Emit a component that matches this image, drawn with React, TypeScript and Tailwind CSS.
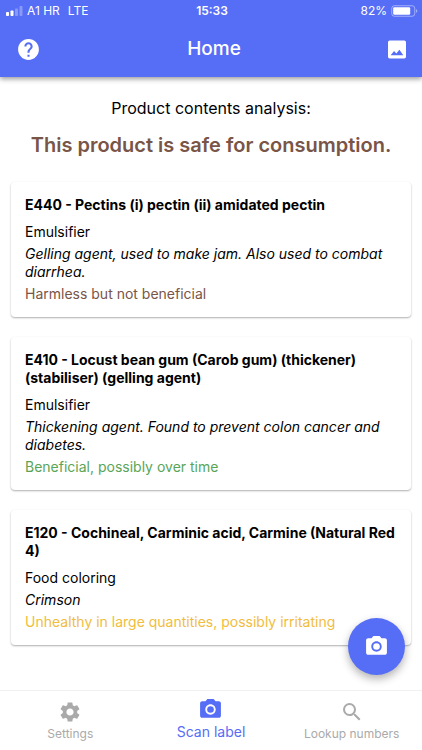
import { MdCameraAlt, MdHelp, MdSearch, MdSettings } from 'react-icons/md'

type Rating = 'harmless' | 'beneficial' | 'unhealthy'

type Additive = {
  title: string
  kind: string
  description: string
  effect: string
  rating: Rating
}

const ADDITIVES: Additive[] = [
  {
    title: 'E440 - Pectins (i) pectin (ii) amidated pectin',
    kind: 'Emulsifier',
    description: 'Gelling agent, used to make jam. Also used to combat diarrhea.',
    effect: 'Harmless but not beneficial',
    rating: 'harmless',
  },
  {
    title: 'E410 - Locust bean gum (Carob gum) (thickener) (stabiliser) (gelling agent)',
    kind: 'Emulsifier',
    description: 'Thickening agent. Found to prevent colon cancer and diabetes.',
    effect: 'Beneficial, possibly over time',
    rating: 'beneficial',
  },
  {
    title: 'E120 - Cochineal, Carminic acid, Carmine (Natural Red 4)',
    kind: 'Food coloring',
    description: 'Crimson',
    effect: 'Unhealthy in large quantities, possibly irritating',
    rating: 'unhealthy',
  },
]

const RATING_COLOR: Record<Rating, string> = {
  harmless: 'text-[#795548]',
  beneficial: 'text-[#5aa557]',
  unhealthy: 'text-[#f0bd3e]',
}

function SignalIcon() {
  return (
    <svg width="17" height="11" viewBox="0 0 17 11" fill="currentColor" aria-hidden="true">
      <rect x="0" y="6" width="3" height="4" rx="0.8" />
      <rect x="4.5" y="4.5" width="3" height="5.5" rx="0.8" />
      <rect x="9" y="2.5" width="3" height="7.5" rx="0.8" opacity="0.3" />
      <rect x="13.5" y="0" width="3" height="10" rx="0.8" opacity="0.3" />
    </svg>
  )
}

function BatteryIcon() {
  return (
    <svg width="27" height="12" viewBox="0 0 27 12" fill="none" aria-hidden="true">
      <rect x="0.75" y="0.75" width="23" height="10.5" rx="2.6" stroke="white" strokeOpacity="0.45" />
      <rect x="2.2" y="2.2" width="17" height="7.6" rx="1.2" fill="white" />
      <path d="M25 4.2c.9.3 1.4 1 1.4 1.8s-.5 1.5-1.4 1.8z" fill="white" fillOpacity="0.45" />
    </svg>
  )
}

function GalleryIcon() {
  return (
    <svg width="19" height="19" viewBox="0 0 19 19" aria-hidden="true">
      <path
        fill="currentColor"
        fillRule="evenodd"
        d="M1.800 0h15.400a1.800 1.800 0 0 1 1.800 1.800v15.400a1.800 1.800 0 0 1-1.800 1.800H1.800a1.800 1.800 0 0 1-1.800-1.800V1.800a1.800 1.800 0 0 1 1.800-1.800zM2.800 15.500h13.400l-4.200-5.800-3.200 4-2.400-2.600z"
      />
    </svg>
  )
}

function StatusBar() {
  return (
    <div className="grid h-[22px] grid-cols-3 items-center pr-1 pl-1.5 text-xs">
      <div className="flex items-center gap-1">
        <SignalIcon />
        <span>A1 HR</span>
        <span className="pl-1">LTE</span>
      </div>
      <span className="text-center font-semibold">15:33</span>
      <div className="flex items-center justify-end gap-1">
        <span>82%</span>
        <BatteryIcon />
      </div>
    </div>
  )
}

function AdditiveCard({ additive }: { additive: Additive }) {
  return (
    <li className="rounded bg-white p-3.5 text-sm leading-[18px] shadow-[0_1px_2px_rgba(0,0,0,0.32)]">
      <h3 className="mb-[9px] font-bold">{additive.title}</h3>
      <div className="space-y-1">
        <p>{additive.kind}</p>
        <p className="italic">{additive.description}</p>
        <p className={RATING_COLOR[additive.rating]}>{additive.effect}</p>
      </div>
    </li>
  )
}

export default function App() {
  return (
    <div className="flex min-h-screen flex-col bg-white font-['Inter',sans-serif] text-black">
      <header className="relative bg-[#566df5] text-white shadow-[0_2px_5px_rgba(0,0,0,0.4)]">
        <StatusBar />
        <div className="flex h-[55px] items-center justify-between px-4">
          <button type="button" aria-label="Help" className="flex w-6 justify-center">
            <MdHelp size={25} className="shrink-0" />
          </button>
          <h1 className="text-[19px] font-medium">Home</h1>
          <button type="button" aria-label="Pick from gallery" className="flex w-[18px] justify-center">
            <GalleryIcon />
          </button>
        </div>
      </header>

      <main className="flex-1 px-[11px] pt-5 pb-11">
        <p className="text-center text-base leading-[22px]">Product contents analysis:</p>
        <h2 className="mt-3 text-center text-xl leading-7 font-semibold text-[#795548]">
          This product is safe for consumption.
        </h2>
        <ul className="mt-[23px] space-y-5">
          {ADDITIVES.map(a => <AdditiveCard key={a.title} additive={a} />)}
        </ul>
      </main>

      <button
        type="button"
        aria-label="Take photo"
        className="fixed right-[17px] bottom-[75px] flex size-[57px] items-center justify-center rounded-full bg-[#566df5] text-white shadow-[0_4px_8px_rgba(0,0,0,0.3)]"
      >
        <MdCameraAlt size={25} />
      </button>

      <nav className="sticky bottom-0 grid h-[60px] grid-cols-3 border-t border-[#f0f0f0] bg-white text-xs leading-4 text-[#aaa]">
        <a href="#settings" className="flex flex-col items-center justify-end gap-0.5 pb-2">
          <MdSettings size={24} />
          <span>Settings</span>
        </a>
        <a href="#scan" className="flex flex-col items-center justify-end gap-0.5 pb-2.5 text-sm leading-4 text-[#566df5]">
          <MdCameraAlt size={25} />
          <span>Scan label</span>
        </a>
        <a href="#lookup" className="flex flex-col items-center justify-end gap-0.5 pb-2">
          <MdSearch size={24} />
          <span>Lookup numbers</span>
        </a>
      </nav>
    </div>
  )
}
